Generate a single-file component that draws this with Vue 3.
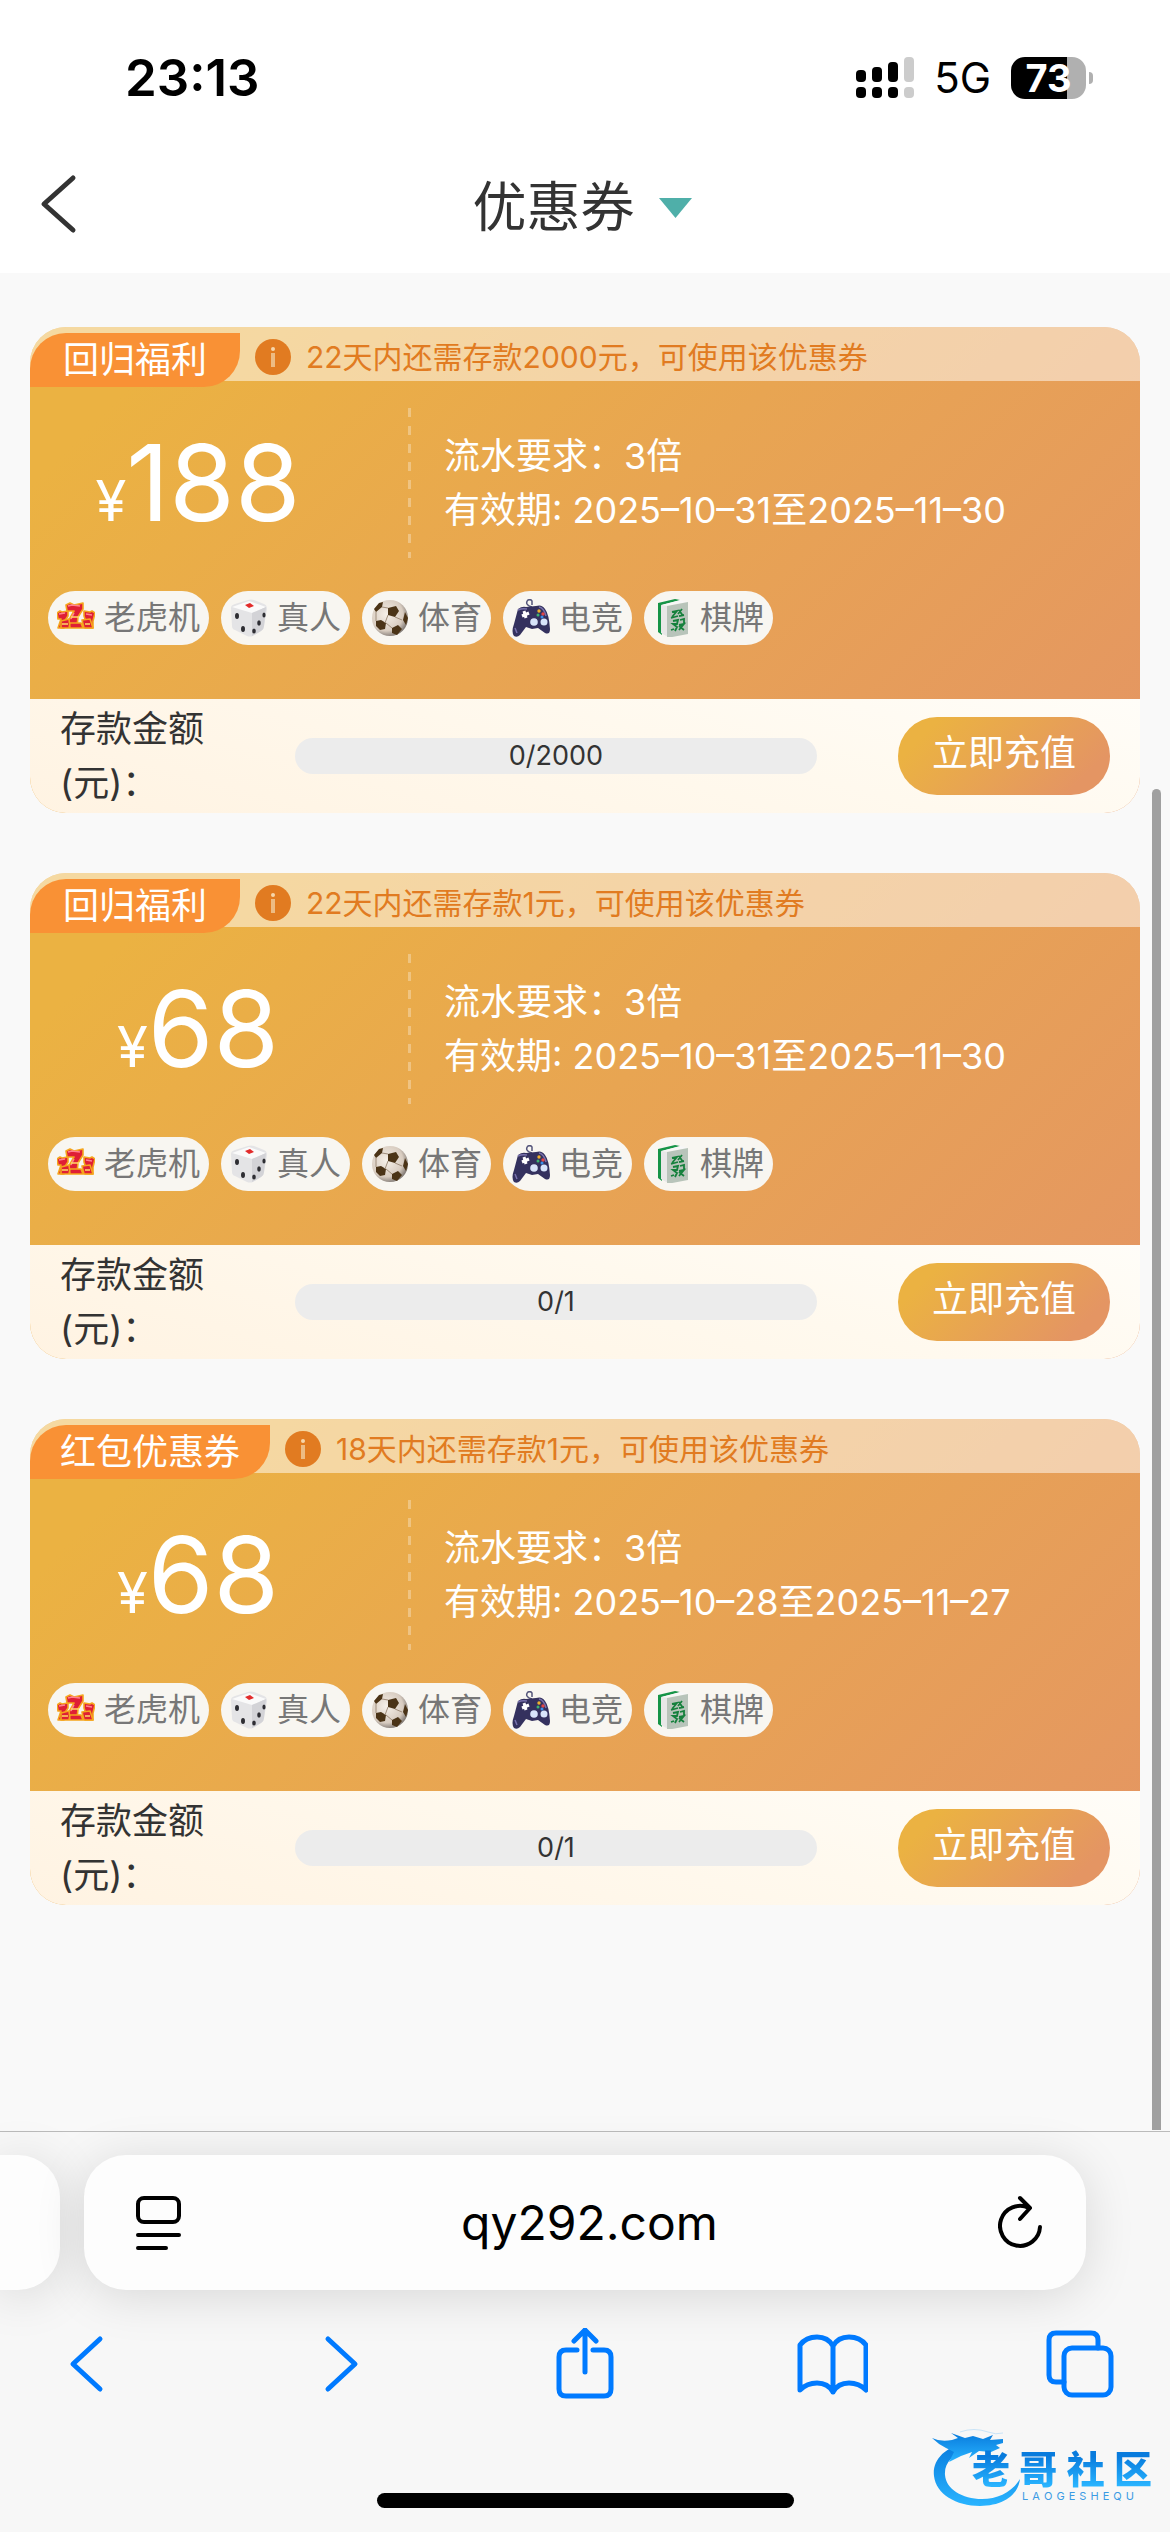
<script setup>
import { ref } from 'vue'

const games = [
  { id: 'slots', name: '老虎机' },
  { id: 'dice', name: '真人' },
  { id: 'ball', name: '体育' },
  { id: 'pad', name: '电竞' },
  { id: 'tile', name: '棋牌' }
]

const coupons = ref([
  { id: 1, tag: '回归福利', notice: '22天内还需存款2000元，可使用该优惠券', amount: 188, times: 3, from: '2025–10–31', to: '2025–11–30', paid: 0, need: 2000 },
  { id: 2, tag: '回归福利', notice: '22天内还需存款1元，可使用该优惠券', amount: 68, times: 3, from: '2025–10–31', to: '2025–11–30', paid: 0, need: 1 },
  { id: 3, tag: '红包优惠券', notice: '18天内还需存款1元，可使用该优惠券', amount: 68, times: 3, from: '2025–10–28', to: '2025–11–27', paid: 0, need: 1 }
])

const percent = (c) => Math.min(100, (c.paid / c.need) * 100) + '%'
</script>

<template>
  <div class="page" lang="zh-CN">
    <!-- game icons -->
    <svg class="sprite" width="0" height="0" aria-hidden="true">
      <symbol id="game-slots" viewBox="0 0 38 38">
        <g stroke="#f5a51d" stroke-width="1.6" stroke-linejoin="round" fill="#df1f35">
          <path d="M0 14l3-2 2 1 6-1v5l-4 6v6H1l3-9H1z" />
          <path d="M38 14l-3-2-2 1-6-1v5l2 6-1 6h8v-7l1-4z" />
          <path d="M9 6l4-2 4 2 9-2v6l-5 8-1 10h-9l1-7 5-9h-7z" />
          <path d="M4 22l8-2 1 9H4zM25 21l8-1 3 9h-9zM13 24h11l2 5H12z" />
        </g>
        <path d="M11 7l4-1 8 1M2 15l6-1M29 15l6 1M17 14l-3 6" stroke="#ff8190" stroke-width="1.5" fill="none" />
        <path d="M14 18h8M5 25h6M28 25h5" stroke="#ffd76a" stroke-width="1.5" />
      </symbol>
      <symbol id="game-dice" viewBox="0 0 38 38">
        <path d="M1 9Q1 6 5 5L18 1q3-1 6 0l10 4q3 1 3 5l-3 17q0 3-3 5l-8 5q-3 1-6 0L5 31q-3-1-3-4z" fill="#e4e4e6" />
        <path d="M2 8L19 2l17 6-14 6z" fill="#fafafa" />
        <path d="M22 14l14-6-2 19q0 3-3 5l-9 5z" fill="#d3d3d7" />
        <path d="M15 6l5-2 4 3-5 2z" fill="#e22b2b" />
        <g fill="#2e2e33">
          <ellipse cx="7" cy="17" rx="2" ry="3" /><ellipse cx="13" cy="30" rx="2" ry="3" />
          <ellipse cx="34" cy="16" rx="1.6" ry="2.6" /><ellipse cx="29" cy="24" rx="1.8" ry="2.8" /><ellipse cx="24" cy="32" rx="1.8" ry="2.6" />
        </g>
      </symbol>
      <symbol id="game-ball" viewBox="0 0 38 38">
        <radialGradient id="ball-fill" cx=".4" cy=".4" r=".65">
          <stop offset="0" stop-color="#f6f0e8" /><stop offset=".7" stop-color="#d8ccc0" /><stop offset="1" stop-color="#77706c" />
        </radialGradient>
        <circle cx="19" cy="19" r="18" fill="url(#ball-fill)" />
        <g fill="#4b3417">
          <path d="M17 9l8-2 3 5-4 6-7-2z" /><path d="M5 22l5-1 5 3-1 6-5 1-4-4z" /><path d="M21 29l6-3 4 4-5 6-5-2z" />
          <path d="M3 10l5-6 4-1-1 5-6 5zM34 13l3 6-2 7-3-5z" />
        </g>
        <path d="M11 8l6 1M5 13v9M17 16l-3 8M24 18l7 3M15 24l6 5" stroke="#9f8d7b" fill="none" />
      </symbol>
      <symbol id="game-pad" viewBox="0 0 38 38">
        <path d="M20 8q-4-1-5-3t1-4q3-1 4 1v4" fill="none" stroke="#54557a" stroke-width="1.5" />
        <path d="M6 10q4-3 8-2l10-1q6-2 9 3 4 5 5 20 0 6-5 4l-7-5-6 1-6-2-6 8q-3 3-6 1-3-4 0-12z" fill="#34315e" />
        <path d="M6 11q4-2 9-1M27 8q5 1 7 9M3 29l2 5" stroke="#7871ac" stroke-width="1.5" fill="none" />
        <path d="M12 12l2 7M10 17l7-3" stroke="#fff" stroke-width="3" />
        <circle cx="22" cy="23" r="3.8" fill="#d8e4fa" /><circle cx="32" cy="23" r="3.5" fill="#d8e4fa" />
        <circle cx="27" cy="12" r="1.7" fill="#f0b12c" /><circle cx="31" cy="15" r="1.7" fill="#e34646" />
        <circle cx="26" cy="16" r="1.5" fill="#3cb371" /><circle cx="30" cy="18" r="1.5" fill="#3b8ee8" />
      </symbol>
      <symbol id="game-tile" viewBox="0 0 38 38">
        <path d="M5 4l17-4 5 1-18 5v30l-4-3z" fill="#169447" />
        <path d="M8 6l20-5 7 2-20 3z" fill="#f7f7f7" />
        <path d="M8 6l7 1v31l-7-4z" fill="#e8e8e8" />
        <path d="M14 7l21-4v32l-21 4z" fill="#b8c4ba" />
        <path d="M19 13l5-1-5 6M26 11l4 6M29 10l-4 5M18 19l7-2M26 17l5-1M20 22l5-1-1 4h-4l4 3-2 4M27 21l4-1v4M26 26l5-1-5 6M26 27l5 4M18 31l3-1" stroke="#15803c" stroke-width="1.8" fill="none" />
      </symbol>
    </svg>

    <header class="top">
      <div class="status">
        <span class="time">23:13</span>
        <div class="status-right">
          <svg class="signal" width="58" height="42" viewBox="0 0 58 42" aria-hidden="true">
            <rect x="0" y="13" width="10" height="12" rx="4" /><rect x="16" y="10" width="10" height="15" rx="4" />
            <rect x="32" y="5" width="10" height="20" rx="4" /><rect x="48" y="0" width="10" height="25" rx="4" fill="#ccc" />
            <rect x="0" y="30" width="10" height="11" rx="4" /><rect x="16" y="30" width="10" height="11" rx="4" />
            <rect x="32" y="30" width="10" height="11" rx="4" /><rect x="48" y="30" width="10" height="11" rx="4" fill="#ccc" />
          </svg>
          <span class="network">5G</span>
          <span class="battery">73</span>
        </div>
      </div>
      <nav class="nav">
        <button class="back" type="button" aria-label="返回">
          <svg width="42" height="60" viewBox="0 0 42 60"><path d="M37 4L8 30l29 26" /></svg>
        </button>
        <button class="title" type="button">
          <span>优惠券</span>
          <svg width="33" height="20" viewBox="0 0 33 20"><path d="M0 0h33L16.500 20z" /></svg>
        </button>
      </nav>
    </header>

    <main class="list">
      <article v-for="c in coupons" :key="c.id" class="coupon">
        <div class="strip">
          <span class="tag">{{ c.tag }}</span>
          <p class="notice">
            <svg width="36" height="36" viewBox="0 0 36 36" aria-hidden="true">
              <circle cx="18" cy="18" r="18" fill="#e17b21" />
              <circle cx="18" cy="10" r="2" fill="#f6d6ab" /><path d="M16 14h4v14h-4z" fill="#edbb83" />
            </svg>
            <span>{{ c.notice }}</span>
          </p>
        </div>
        <div class="info">
          <div class="amount"><small>¥</small>{{ c.amount }}</div>
          <div class="rule">
            <p>流水要求：{{ c.times }}倍</p>
            <p>有效期: {{ c.from }}至{{ c.to }}</p>
          </div>
        </div>
        <ul class="games">
          <li v-for="g in games" :key="g.id">
            <svg width="38" height="38" aria-hidden="true"><use :href="'#game-' + g.id" /></svg>
            <span>{{ g.name }}</span>
          </li>
        </ul>
        <div class="deposit">
          <span :id="'deposit-' + c.id" class="deposit-label">存款金额 (元)：</span>
          <div class="progress" role="progressbar" :aria-labelledby="'deposit-' + c.id" :aria-valuenow="c.paid" :aria-valuemax="c.need">
            <div class="progress-bar" :style="{ width: percent(c) }"></div>
            <span>{{ c.paid }}/{{ c.need }}</span>
          </div>
          <button class="recharge" type="button">立即充值</button>
        </div>
      </article>
    </main>
    <div class="scrollbar"></div>

    <footer class="browser">
      <div class="tabs-row">
        <div class="prev-tab"></div>
        <div class="address">
          <button type="button" aria-label="页面菜单">
            <svg width="46" height="56" viewBox="0 0 46 56"><rect x="3" y="3" width="41" height="24" rx="6" /><path d="M3 40h41M3 53h28" /></svg>
          </button>
          <span class="url">qy292.com</span>
          <button type="button" aria-label="刷新">
            <svg width="46" height="56" viewBox="0 0 46 56"><path d="M31 13A20 20 0 1 0 42 32M22 3l10 10-10 11" /></svg>
          </button>
        </div>
        <div class="next-tab"></div>
      </div>
      <div class="toolbar">
        <button type="button" aria-label="后退"><svg viewBox="0 0 72 72"><path d="M50 11L23 36l27 25" /></svg></button>
        <button type="button" aria-label="前进"><svg viewBox="0 0 72 72"><path d="M29 11l27 25-27 25" /></svg></button>
        <button type="button" aria-label="分享">
          <svg viewBox="0 0 72 72"><path d="M30 22H19q-7 0-7 7v32q0 7 7 7h38q7 0 7-7V29q0-7-7-7H46M38 44V2M27 13L38 2l11 11" /></svg>
        </button>
        <button type="button" aria-label="书签">
          <svg viewBox="0 0 72 72"><path d="M37 18Q32 9 21 9 10 9 4 17v45q7-7 17-7 11 0 16 9 5-9 16-9 10 0 17 7V17Q64 9 53 9 42 9 37 18v46" /></svg>
        </button>
        <button type="button" aria-label="标签页">
          <svg viewBox="0 0 72 72"><path d="M20 54h-8q-7 0-7-7V12q0-7 7-7h35q7 0 7 7v8" /><rect x="20" y="20" width="47" height="47" rx="8" /></svg>
        </button>
      </div>
      <div class="home-bar"></div>
      <div class="mark">
        <svg width="110" height="82" viewBox="0 0 110 82" aria-hidden="true">
          <linearGradient id="mark-fill" x1="0" y1="0" x2="0" y2="1">
            <stop offset="0" stop-color="#087bdd" /><stop offset="1" stop-color="#29b4ff" />
          </linearGradient>
          <g fill="url(#mark-fill)">
            <path d="M34 17C12 21 0 35 2 50c2 18 22 30 46 30 22 0 38-10 40-27-8 13-22 20-38 20-20 0-36-10-37-24-1-12 8-22 24-25z" />
            <path d="M0 12q8 4 20 2l6-2-7-5 14 5 8-2 10 3 10-4-3 5 13-1v4l-7 2 4 3-9 4-12-1-10 7 3-6-11 4-12 6 5-10-8-4Q6 18 0 12z" />
          </g>
          <path d="M28 6q14-5 28 0 8 3 15 1" fill="none" stroke="#c9e4f8" stroke-width="1" />
        </svg>
        <div class="mark-text">
          <b><span v-for="ch in '老哥社区'" :key="ch">{{ ch }}</span></b>
          <small><span v-for="(ch, i) in 'LAOGESHEQU'" :key="i">{{ ch }}</span></small>
        </div>
      </div>
    </footer>
  </div>
</template>

<style>
body {
  margin: 0;
  background: #f9f9f9;
}
</style>

<style scoped>
.page {
  position: relative;
  display: flex;
  flex-direction: column;
  min-height: 100vh;
  overflow: hidden;
  background: #f9f9f9;
  color: #333;
  font-family: Inter, "Noto Sans CJK SC", sans-serif;
  font-size: 36px;
  line-height: 54px;
}

.page * {
  box-sizing: border-box;
}

.sprite {
  position: absolute;
}

svg {
  display: block;
  flex: none;
}

p,
ul {
  margin: 0;
  padding: 0;
  list-style: none;
}

button {
  padding: 0;
  border: 0;
  background: none;
  color: inherit;
  font: inherit;
}

.top {
  background: #fff;
}

.status {
  display: flex;
  align-items: center;
  justify-content: space-between;
  height: 138px;
  padding: 18px 84px 0 125px;
  color: #000;
}

.time {
  font-size: 51px;
  font-weight: 600;
}

.status-right {
  display: flex;
  align-items: center;
  gap: 20px;
}

.network {
  font-size: 42px;
}

.battery {
  position: relative;
  width: 75px;
  height: 42px;
  border-radius: 14px;
  background: linear-gradient(90deg, #000 75%, #b0b0b0 75%);
  color: #fff;
  font-size: 38px;
  font-weight: 700;
  line-height: 42px;
  text-align: center;
}

.battery::after {
  content: "";
  position: absolute;
  top: 15px;
  right: -7px;
  width: 4px;
  height: 12px;
  border-radius: 0 4px 4px 0;
  background: #b0b0b0;
}

.nav {
  display: grid;
  grid-template-columns: 120px 1fr 120px;
  align-items: center;
  height: 135px;
}

.back {
  padding: 0 0 4px 36px;
}

.back path {
  fill: none;
  stroke: #333;
  stroke-width: 5;
  stroke-linecap: round;
  stroke-linejoin: round;
}

.title {
  display: flex;
  align-items: center;
  justify-content: center;
  gap: 24px;
  padding: 4px 6px 0 0;
  font-size: 54px;
}

.title path {
  fill: #4fafa9;
}

.list {
  display: flex;
  flex: 1;
  flex-direction: column;
  gap: 60px;
  padding: 54px 30px;
}

.coupon {
  overflow: hidden;
  border-radius: 36px;
  background: linear-gradient(135deg, #ebb242 10%, #e8a552 50%, #e49563);
  color: #fff;
}

.strip {
  display: flex;
  align-items: flex-start;
  gap: 15px;
  height: 54px;
  background: rgba(255, 255, 255, 0.5);
}

.tag {
  min-width: 210px;
  margin-top: 6px;
  padding: 0 30px;
  border-radius: 36px 0;
  background: #f99135;
  text-align: center;
}

.notice {
  display: flex;
  align-items: center;
  gap: 15px;
  padding-top: 3px;
  color: #e17b21;
  font-size: 30px;
}

.info {
  display: flex;
  align-items: center;
  height: 150px;
  margin-top: 27px;
}

.amount {
  display: flex;
  align-items: baseline;
  justify-content: center;
  width: 378px;
  padding-right: 42px;
  font-size: 106px;
  line-height: 150px;
}

.amount small {
  font-size: 56px;
  line-height: 56px;
}

.rule {
  display: flex;
  flex: 1;
  flex-direction: column;
  justify-content: center;
  height: 150px;
  padding-left: 36px;
  background: repeating-linear-gradient(rgba(255, 255, 255, 0.3) 0 9px, transparent 9px 18px) left / 3px 100% no-repeat;
}

.games {
  display: flex;
  gap: 12px;
  margin-top: 33px;
  padding: 0 18px 54px;
}

.games li {
  display: flex;
  align-items: center;
  gap: 9px;
  padding: 0 9px;
  border-radius: 27px;
  background: #f8f6f1;
  color: #777;
  font-size: 32px;
}

.deposit {
  display: flex;
  align-items: center;
  padding: 3px 30px;
  background: linear-gradient(15deg, #fff3e2, #fff9ee 60%, #fffdf8);
  color: #333;
}

.deposit-label {
  flex: none;
  width: 170px;
  margin-right: 65px;
}

.progress {
  position: relative;
  flex: 1;
  height: 36px;
  overflow: hidden;
  border-radius: 18px;
  background: #ececec;
  font-size: 27px;
  line-height: 36px;
  text-align: center;
}

.progress-bar {
  position: absolute;
  inset: 0 auto 0 0;
  background: #ebb242;
}

.progress span {
  position: relative;
}

.recharge {
  height: 78px;
  margin-left: 81px;
  padding: 0 34px 6px;
  border-radius: 39px;
  background: linear-gradient(135deg, #ebb242 15%, #e49563 85%);
  color: #fff;
}

.scrollbar {
  position: absolute;
  top: 789px;
  right: 9px;
  bottom: 402px;
  width: 9px;
  border-radius: 5px 5px 0 0;
  background: #a0a0a0;
}

.browser {
  position: relative;
  padding-bottom: 24px;
  border-top: 1px solid #bbb;
  background: #f7f7f7;
  color: #000;
}

.tabs-row {
  display: flex;
  gap: 24px;
  padding-top: 23px;
}

.prev-tab,
.address {
  height: 135px;
  background: #fdfdfd;
  box-shadow: 0 6px 50px rgba(0, 0, 0, 0.13);
}

.prev-tab {
  width: 60px;
  border-radius: 0 42px 42px 0;
}

.next-tab {
  width: 60px;
}

.address {
  display: flex;
  flex: 1;
  align-items: center;
  justify-content: space-between;
  padding: 0 42px 0 51px;
  border-radius: 42px;
  font-size: 48px;
}

.address path,
.address rect,
.toolbar path,
.toolbar rect {
  fill: none;
  stroke: #000;
  stroke-width: 4;
  stroke-linecap: round;
  stroke-linejoin: round;
}

.toolbar {
  display: flex;
  justify-content: space-between;
  padding: 38px 54px 0 50px;
}

.toolbar svg {
  width: 72px;
  height: 72px;
}

.toolbar path,
.toolbar rect {
  stroke: #007aff;
  stroke-width: 5;
}

.home-bar {
  width: 417px;
  height: 15px;
  margin: 93px auto 0;
  border-radius: 8px;
  background: #000;
}

.mark {
  position: absolute;
  right: 18px;
  bottom: 24px;
  display: flex;
}

.mark-text {
  width: 180px;
  margin-left: -70px;
  padding-top: 22px;
}

.mark-text b,
.mark-text small {
  display: flex;
  justify-content: space-between;
}

.mark-text b {
  background: linear-gradient(#087bdd 20%, #29b4ff 90%);
  background-clip: text;
  color: transparent;
  font-size: 38px;
  font-weight: 900;
  line-height: 42px;
}

.mark-text small {
  padding: 0 18px 0 50px;
  color: #3b9be4;
  font-size: 11px;
  line-height: 12px;
}
</style>
